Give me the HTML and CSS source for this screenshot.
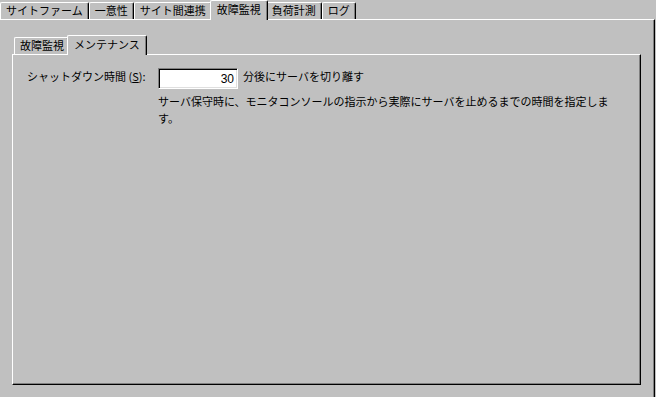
FILE: index.html
```html
<!DOCTYPE html>
<html lang="ja">

<head>
    <meta charset="UTF-8">
    <meta name="viewport" content="width=device-width, initial-scale=1.0">
    <title>故障監視 - メンテナンス</title>

    <link rel="stylesheet" href="styles.css">
</head>

<body>
    <div class="tabs top-tabs">
        <div class="tab">サイトファーム</div>
        <div class="tab">一意性</div>
        <div class="tab">サイト間連携</div>
        <div class="tab active">故障監視</div>
        <div class="tab">負荷計測</div>
        <div class="tab">ログ</div>
    </div>

    <div class="panel outer">
        <div class="tabs inner-tabs">
            <div class="tab">故障監視</div>
            <div class="tab active">メンテナンス</div>
        </div>

        <div class="panel inner">
            <div class="row">
                <label class="label" for="shutdown">シャットダウン時間 (<u>S</u>):</label>
                <input class="field" type="text" id="shutdown" value="30">
                <span class="unit">分後にサーバを切り離す</span>
            </div>
            <p class="desc">サーバ保守時に、モニタコンソールの指示から実際にサーバを止めるまでの時間を指定します。</p>
        </div>
    </div>
</body>

</html>
```

FILE: styles.css
```css
body {
    margin: 0;
    height: 397px;
    overflow: hidden;
    background-color: #c0c0c0;
    color: #000;
    font-family: "Noto Sans CJK JP", "Liberation Sans", sans-serif;
    font-size: 11px;
}

.tabs {
    display: flex;
    align-items: flex-end;
    height: 19px;
    position: relative;
    z-index: 1;
}

.tab {
    height: 17px;
    box-sizing: border-box;
    padding: 0 4px 0 5px;
    line-height: 15px;
    border-top: 1px solid #fff;
    border-left: 1px solid #fff;
    border-right: 1px solid #000;
    border-radius: 2px 2px 0 0;
    box-shadow: inset -1px 0 #808080;
    white-space: nowrap;
}

.top-tabs .tab {
    padding: 0 5px;
}

.tab.active,
.top-tabs .tab.active {
    height: 20px;
    margin: 0 -2px -1px;
    padding: 0 6px;
    line-height: 16px;
    background-color: #c0c0c0;
    position: relative;
    z-index: 1;
}

.inner-tabs {
    padding-left: 2px;
}

.panel {
    box-sizing: border-box;
    border-top: 1px solid #fff;
}

.outer {
    width: 655px;
    height: 378px;
    padding: 15px 13px 0 12px;
    border-right: 1px solid #000;
    box-shadow: inset -1px 0 #808080;
}

.inner {
    height: 331px;
    padding: 13px 14px;
    border-left: 1px solid #fff;
    border-right: 1px solid #000;
    border-bottom: 1px solid #000;
    box-shadow: inset -1px -1px #808080;
}

.row {
    display: flex;
    align-items: flex-start;
}

.label {
    width: 131px;
    line-height: 16px;
}

.field {
    width: 80px;
    height: 21px;
    box-sizing: border-box;
    margin: 0;
    padding: 0 3px 0 0;
    border: 1px solid;
    border-color: #808080 #fff #fff #808080;
    box-shadow: inset 1px 1px #000, inset -1px -1px #dfdfdf;
    background-color: #fff;
    text-align: right;
    font-family: "Liberation Sans", sans-serif;
    font-size: 12px;
    color: #000;
    outline: none;
}

.unit {
    margin-left: 5px;
    line-height: 16px;
}

.desc {
    width: 456px;
    margin: 4px 0 0 131px;
    line-height: 17px;
}
```
